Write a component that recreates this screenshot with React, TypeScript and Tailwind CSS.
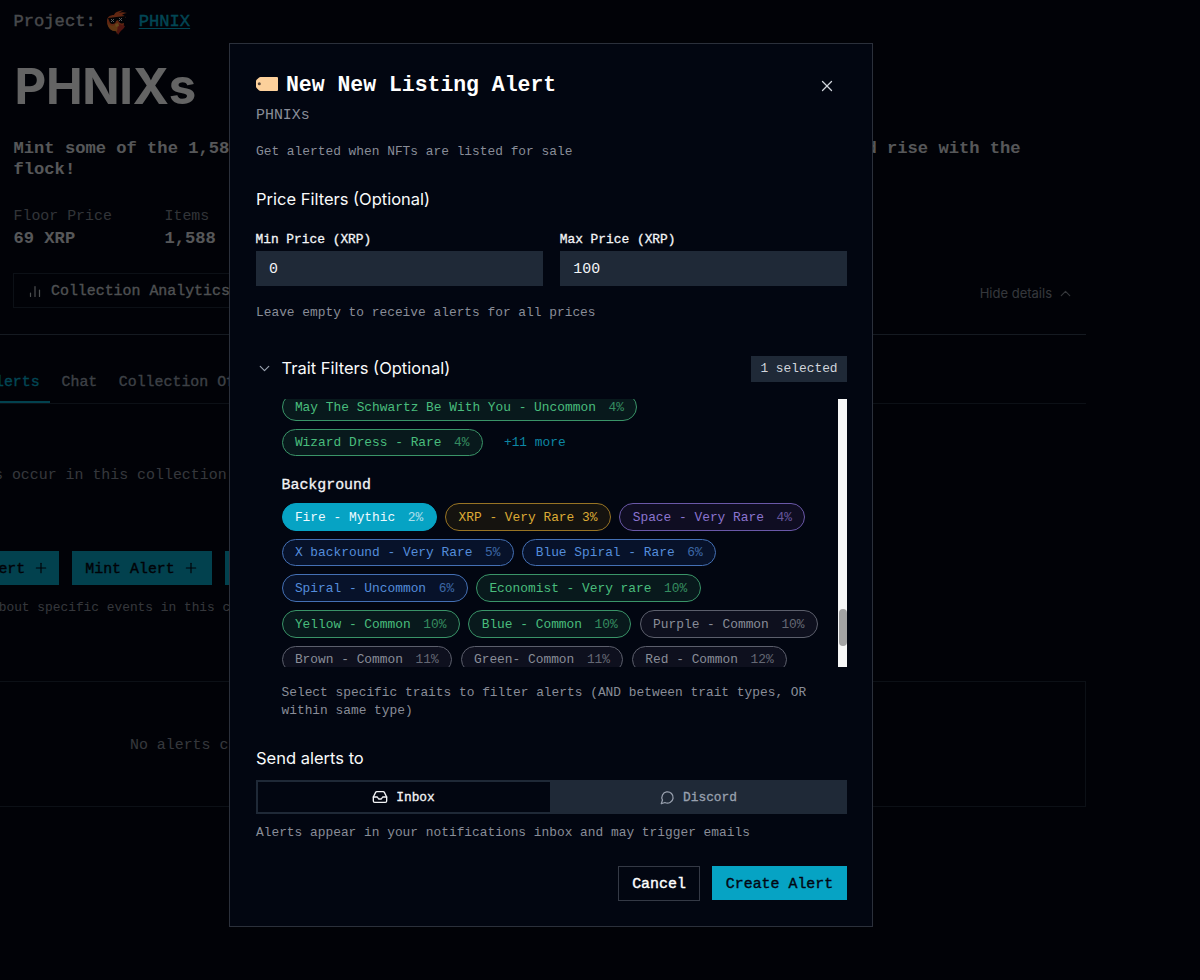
import { ReactNode } from "react";
import { ChevronDown, ChevronUp, Inbox, Plus, X } from "lucide-react";
import clsx from "clsx";

type Tone = "green" | "gold" | "purple" | "blue" | "gray" | "selected";

type Trait = {
  label: string;
  percent: string;
  tone: Tone;
};

const tones: Record<Tone, string> = {
  green: "border-[#3a9468] bg-[#08191c] text-[#49bd7d]",
  gold: "border-[#987424] bg-[#15130f] text-[#dcaa35]",
  purple: "border-[#6a58a8] bg-[#0f0d22] text-[#8b74cf]",
  blue: "border-[#4470b4] bg-[#07122a] text-[#548ddb]",
  gray: "border-[#5c5f6c] bg-[#0e101e] text-[#898d98]",
  selected: "border-[#06a3c4] bg-[#06a3c4] text-[#eefaff]",
};

const clothesRows: Trait[][] = [
  [
    {
      label: "May The Schwartz Be With You - Uncommon",
      percent: "4%",
      tone: "green",
    },
  ],
  [{ label: "Wizard Dress - Rare", percent: "4%", tone: "green" }],
];

const backgroundRows: Trait[][] = [
  [
    { label: "Fire - Mythic", percent: "2%", tone: "selected" },
    { label: "XRP - Very Rare 3%", percent: "", tone: "gold" },
    { label: "Space - Very Rare", percent: "4%", tone: "purple" },
  ],
  [
    { label: "X backround - Very Rare", percent: "5%", tone: "blue" },
    { label: "Blue Spiral - Rare", percent: "6%", tone: "blue" },
  ],
  [
    { label: "Spiral - Uncommon", percent: "6%", tone: "blue" },
    { label: "Economist - Very rare", percent: "10%", tone: "green" },
  ],
  [
    { label: "Yellow - Common", percent: "10%", tone: "green" },
    { label: "Blue - Common", percent: "10%", tone: "green" },
    { label: "Purple - Common", percent: "10%", tone: "gray" },
  ],
  [
    { label: "Brown - Common", percent: "11%", tone: "gray" },
    { label: "Green- Common", percent: "11%", tone: "gray" },
    { label: "Red - Common", percent: "12%", tone: "gray" },
  ],
];

export default function App() {
  return (
    <div className="relative h-[980px] w-[1200px] overflow-hidden bg-[#030712] font-['Liberation_Mono',monospace] whitespace-nowrap">
      <CollectionPage />
      <div className="absolute inset-0 bg-black/60" />
      <AlertDialog />
    </div>
  );
}

function CollectionPage() {
  return (
    <div className="flex w-[1086px] flex-col text-[14.92px] text-gray-400">
      <div className="ml-[13.5px] flex h-[42px] items-center pt-[2px] text-[17.14px]">
        <span className="text-[#b4b7bd] [-webkit-text-stroke:0.4px]">
          Project:
        </span>
        <Phoenix />
        <a
          className="ml-[9.5px] text-[#06b0d2] underline underline-offset-2 [-webkit-text-stroke:0.4px]"
          href="#"
        >
          PHNIX
        </a>
      </div>
      <h1 className="ml-[14.5px] flex h-[90px] items-center font-['Inter',sans-serif] text-[49px] font-bold tracking-[-0.3px] text-[#fafafa]">
        PHNIXs
      </h1>
      <div className="ml-[13.5px] h-[73px] pt-[6px] text-[17.14px] leading-[21.4px] font-bold text-[#d8dade]">
        <div>
          Mint some of the 1,588 PHNIXs, gather your feathers, burn what is old,
          be reborn and rise with the
        </div>
        <div>flock!</div>
      </div>
      <div className="ml-[13.5px] flex h-[68px]">
        <Stat label="Floor Price" value="69 XRP" />
        <Stat label="Items" value="1,588" />
      </div>
      <div className="ml-[13px] flex h-[61px] items-start">
        <div className="flex h-[35px] w-[260px] items-center border border-gray-800 pt-[2px] pl-[14px] text-[#c4c7cd] [-webkit-text-stroke:0.3px]">
          <svg width="15" height="15" viewBox="0 0 15 15" className="mr-[8px]">
            <path
              d="M2.500 12.500V9M7 12.500V2.500M11.500 12.500V6"
              stroke="currentColor"
              strokeWidth="1.2"
              strokeLinecap="round"
            />
          </svg>
          Collection Analytics
        </div>
        <div className="mt-[11px] ml-auto flex items-center pr-[12px] font-['Inter',sans-serif] text-[13px] text-[#868b96]">
          Hide details
          <ChevronUp size={17} strokeWidth={1.6} className="ml-[5px]" />
        </div>
      </div>
      <div className="-ml-[14px] flex h-[70px] items-end border-y border-t-gray-700 border-b-gray-800 [-webkit-text-stroke:0.3px]">
        <div className="flex h-[43px] w-[64px] items-center border-b-2 border-[#06a3c4] pt-[4px] text-[#06b0d2]">
          Alerts
        </div>
        <div className="ml-[11.5px] flex h-[43px] items-center pt-[2px]">
          Chat
        </div>
        <div className="ml-[21.5px] flex h-[43px] items-center pt-[2px]">
          Collection Offers
        </div>
      </div>
      <div className="-ml-[6px] flex h-[142px] items-center text-[#868b96]">
        s occur in this collection
      </div>
      <div className="mt-[5px] -ml-[74px] flex gap-[13px]">
        <PageButton width="w-[133px]">List Alert</PageButton>
        <PageButton width="w-[140px]">Mint Alert</PageButton>
        <PageButton width="w-[140px]">Sale Alert</PageButton>
      </div>
      <div className="-ml-[9px] flex h-[43px] items-center pt-[2px] text-[12.86px] text-[#868b96]">
        about specific events in this collection
      </div>
      <div className="mt-[53px] -ml-[2px] flex h-[126px] items-center border border-gray-800 pt-[2px] pl-[131px] text-[#868b96]">
        No alerts configured
      </div>
    </div>
  );
}

function Stat({ label, value }: { label: string; value: string }) {
  return (
    <div className="w-[151px]">
      <div className="flex h-[22px] items-center pt-[1px] text-[#7d828d]">
        {label}
      </div>
      <div className="flex h-[22px] items-center pt-[1px] text-[17.14px] font-bold text-[#d8dade]">
        {value}
      </div>
    </div>
  );
}

function PageButton({
  children,
  width,
}: {
  children: ReactNode;
  width: string;
}) {
  return (
    <button
      className={clsx(
        "flex h-[34px] shrink-0 items-center justify-center bg-[#06a3c4] pt-[2px] text-[#030712] [-webkit-text-stroke:0.4px]",
        width,
      )}
    >
      {children}
      <Plus size={16} strokeWidth={1.8} className="mb-[3px] ml-[8px]" />
    </button>
  );
}

function AlertDialog() {
  return (
    <div className="absolute top-[43px] left-[229px] flex h-[884px] w-[644px] flex-col border border-[#2b303b] bg-[#020611] pr-[25px] pl-[26px] text-[12.86px] text-gray-400">
      <div className="mt-[27px] flex h-[28px] items-center">
        <TagIcon />
        <h2 className="ml-[8px] pt-[1px] text-[21.45px] font-bold text-white">
          New New Listing Alert
        </h2>
        <X
          size={18}
          strokeWidth={1.7}
          className="mt-[2px] mr-[11px] ml-auto text-gray-300"
        />
      </div>
      <div className="mt-[3px] flex h-[26px] items-center text-[14.92px] text-[#898d98]">
        PHNIXs
      </div>
      <div className="mt-[11px] flex h-[26px] items-center text-[#898d98]">
        Get alerted when NFTs are listed for sale
      </div>

      <SectionTitle className="mt-[21px]">Price Filters (Optional)</SectionTitle>
      <div className="mt-[17px] -ml-[0.5px] flex gap-[17px]">
        <PriceInput label="Min Price (XRP)" value="0" />
        <PriceInput label="Max Price (XRP)" value="100" />
      </div>
      <div className="mt-[14px] flex h-[26px] items-center text-[#898d98]">
        Leave empty to receive alerts for all prices
      </div>

      <div className="mt-[30px] flex h-[26px] items-center">
        <ChevronDown
          size={17}
          strokeWidth={1.7}
          className="mr-[9px] -ml-[0.5px]"
        />
        <SectionTitle>Trait Filters (Optional)</SectionTitle>
        <span className="ml-auto flex h-[26px] w-[96px] items-center justify-center bg-[#1f2937] pt-[1px] text-gray-300">
          1 selected
        </span>
      </div>
      <TraitList />
      <div className="mt-[17px] ml-[25.5px] leading-[17.6px] text-[#898d98]">
        Select specific traits to filter alerts (AND between trait types, OR
        <br />
        within same type)
      </div>

      <SectionTitle className="mt-[26px]">Send alerts to</SectionTitle>
      <div className="mt-[9px] flex h-[34px] border-2 border-[#1f2937] bg-[#1f2937] [-webkit-text-stroke:0.3px]">
        <div className="flex w-[292px] items-center justify-center bg-[#020611] pr-[1px] text-gray-100">
          <Inbox size={16} strokeWidth={2} className="mr-[8px]" />
          Inbox
        </div>
        <div className="flex flex-1 items-center justify-center pl-[2px]">
          <ChatBubble />
          Discord
        </div>
      </div>
      <div className="mt-[5px] flex h-[26px] items-center text-[#898d98]">
        Alerts appear in your notifications inbox and may trigger emails
      </div>
      <div className="mt-[21px] flex justify-end gap-[12px] text-[14.92px]">
        <button className="h-[35px] w-[82px] border border-[#343945] text-white [-webkit-text-stroke:0.4px]">
          Cancel
        </button>
        <button className="h-[34px] w-[135px] bg-[#06a3c4] pt-[1px] text-[#030712] [-webkit-text-stroke:0.4px]">
          Create Alert
        </button>
      </div>
    </div>
  );
}

function SectionTitle({
  children,
  className,
}: {
  children: ReactNode;
  className?: string;
}) {
  return (
    <h3
      className={clsx(
        "flex h-[26px] items-center font-['Inter',sans-serif] text-[16.5px] text-gray-50",
        className,
      )}
    >
      {children}
    </h3>
  );
}

function PriceInput({ label, value }: { label: string; value: string }) {
  return (
    <label className="flex-1">
      <div className="flex h-[22px] items-center text-gray-100 [-webkit-text-stroke:0.3px]">
        {label}
      </div>
      <input
        readOnly
        value={value}
        className="block h-[34.5px] w-full bg-[#1f2937] px-[13.5px] pt-[2px] text-[14.92px] text-gray-100"
      />
    </label>
  );
}

function TraitList() {
  return (
    <div className="mt-[17.5px] ml-[25.5px] flex h-[268px] overflow-hidden">
      <div className="flex-1">
        <div className="-mt-[6px] flex flex-col gap-[8px]">
          <TraitRow traits={clothesRows[0]} />
          <div className="flex items-center">
            <TraitRow traits={clothesRows[1]} />
            <span className="ml-[21px] pt-[1px] text-[#0c87a5]">+11 more</span>
          </div>
        </div>
        <div className="mt-[16px] mb-[5px] flex h-[26px] items-center text-[14.92px] text-gray-100 [-webkit-text-stroke:0.3px]">
          Background
        </div>
        <div className="flex flex-col gap-[8px]">
          {backgroundRows.map((row) => (
            <TraitRow key={row[0].label} traits={row} />
          ))}
        </div>
      </div>
      {/* scroll track */}
      <div className="w-[9px] bg-[#f7f7f7]">
        <div className="mt-[210px] ml-[1px] h-[37px] w-[8px] rounded-full bg-[#a3a3a3]" />
      </div>
    </div>
  );
}

function TraitRow({ traits }: { traits: Trait[] }) {
  return (
    <div className="flex gap-[8.5px]">
      {traits.map((trait) => (
        <span
          key={trait.label}
          className={clsx(
            "flex h-[27.6px] items-center rounded-full border px-[12.4px] pt-[1px]",
            tones[trait.tone],
          )}
        >
          {trait.label}
          {trait.percent && (
            <span className="ml-[12.6px] opacity-70">{trait.percent}</span>
          )}
        </span>
      ))}
    </div>
  );
}

function ChatBubble() {
  return (
    <svg
      width="15"
      height="15"
      viewBox="0 0 24 24"
      fill="none"
      stroke="currentColor"
      strokeWidth="2"
      strokeLinecap="round"
      strokeLinejoin="round"
      className="mr-[8px]"
    >
      <path d="M7.9 20A9 9 0 1 0 4 16.1L2 22Z" />
    </svg>
  );
}

function TagIcon() {
  return (
    <svg width="22" height="14" viewBox="0 0 22 14" className="mb-[2px]">
      <path
        d="M4.500 0H21a1 1 0 0 1 1 1v12a1 1 0 0 1-1 1H4.500Q3.500 14 2.800 13.200L.6 11Q0 10.300 0 9.500V4.300Q0 3.500.6 2.800L2.800.7Q3.500 0 4.500 0z"
        fill="#fcd09b"
      />
      <circle cx="3.300" cy="6.800" r="1.500" fill="#5a4636" />
    </svg>
  );
}

function Phoenix() {
  return (
    <svg width="24" height="26" viewBox="0 0 24 26" className="ml-[9.5px]">
      <path
        d="M2 12c0-4 3-6 7-6 1-3 5-4 10-5-2 1-4 2-5 3 2-1 5-1 8 0-2 0-4 1-5 2 2 0 3 1 4 3-2-1-3 0-4 2l2 3c0 4-2 6-4 7l-3 4-1-3c-6 0-9-4-9-10z"
        fill="#f0602d"
      />
      <path d="M2.500 14c3 4 7 3 9 1l1 7c-5 1-9-2-10-8z" fill="#f08a2f" />
      <path d="M14 15l6 2c-1 3-4 4-5 6l-2 3-1-4z" fill="#c8352a" />
      <path d="M3 9l17-2v2l-1 5c-3 1-5 0-6-3l-2 1c0 3-4 4-6 2z" fill="#07090d" />
      <path
        d="M6 10l3 3m0-3l-3 3M14 9l3 3m0-3l-3 3"
        stroke="#d5d9df"
        strokeWidth="1"
      />
      <path d="M10 15l3-1 1 3-3 1z" fill="#ffb347" />
    </svg>
  );
}
